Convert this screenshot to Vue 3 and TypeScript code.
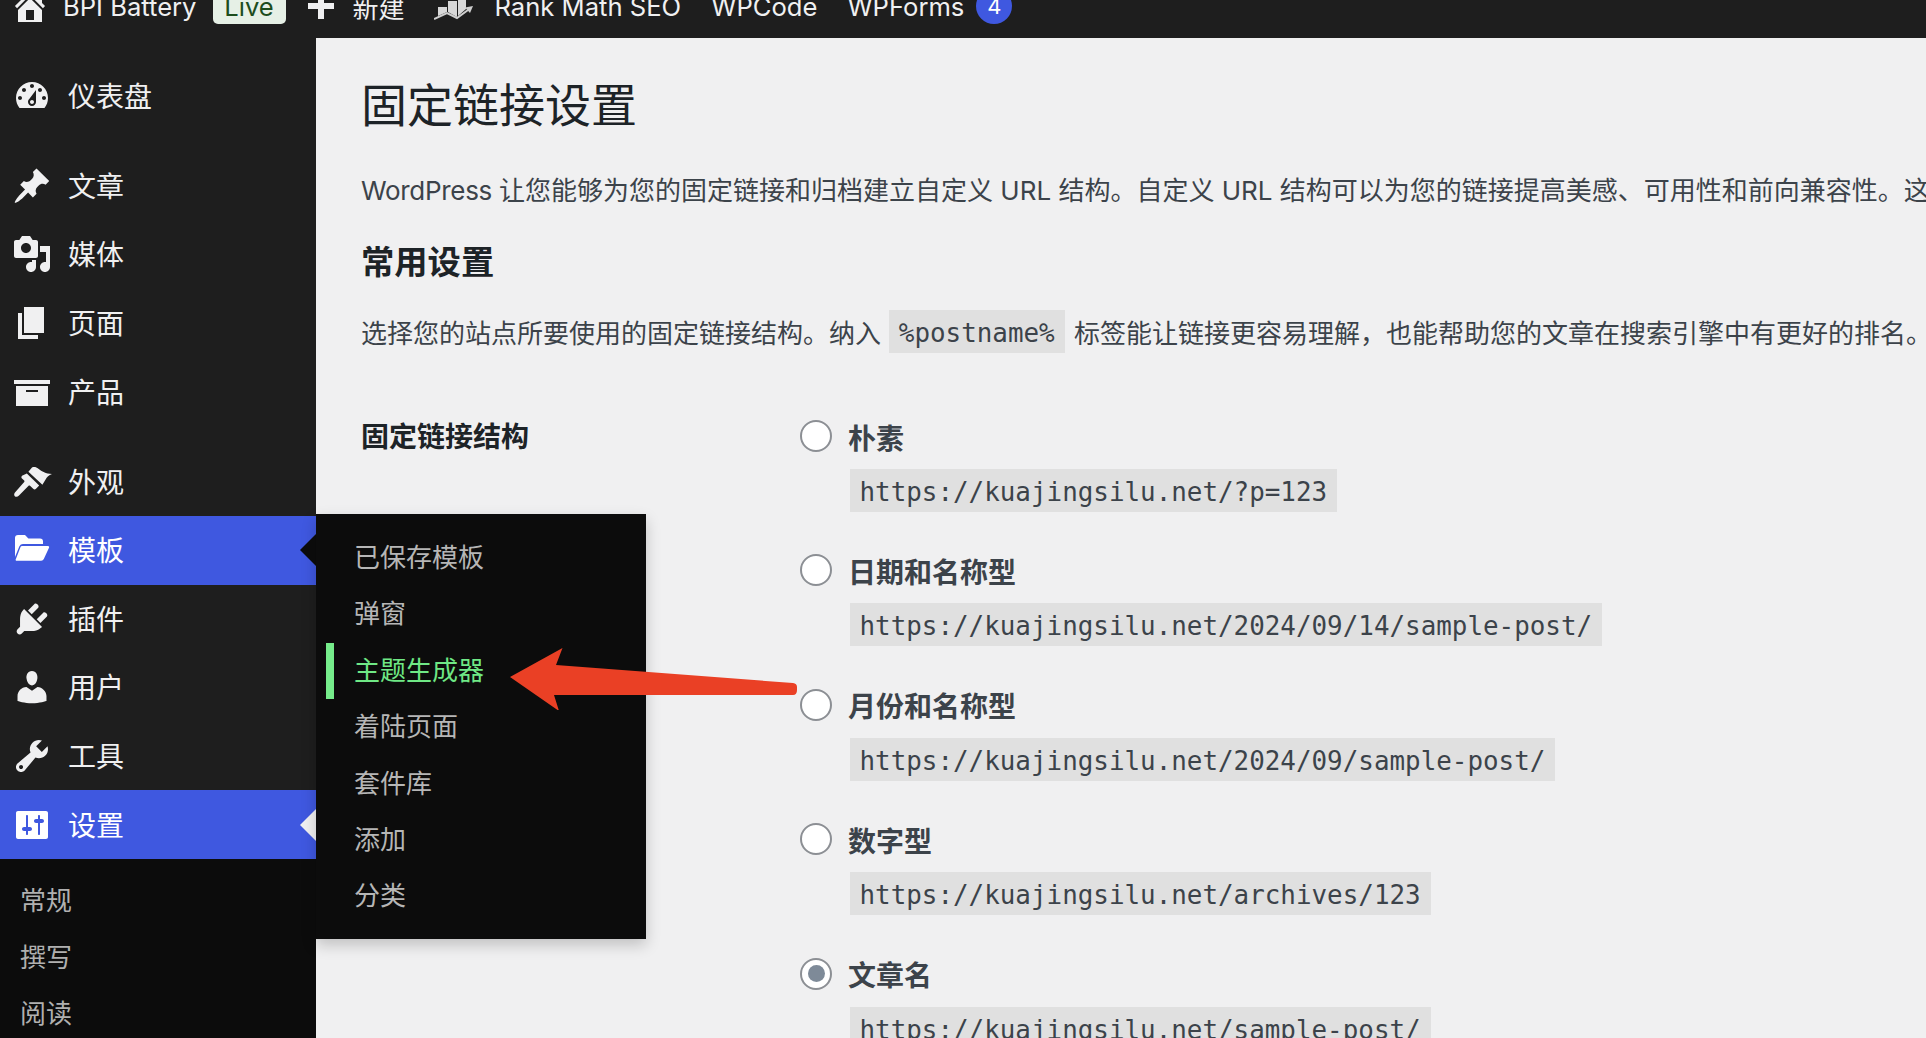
<script setup lang="ts">
interface MenuItem { label: string; d: string; gap?: number; state?: string }
const menu: MenuItem[] = [
  { label: '仪表盘', gap: 1, d: 'M3.76 16h12.48c1.1-1.37 1.76-3.11 1.76-5 0-4.42-3.58-8-8-8s-8 3.58-8 8c0 1.89.66 3.63 1.76 5zM10 4c.55 0 1 .45 1 1s-.45 1-1 1-1-.45-1-1 .45-1 1-1zM6 6c.55 0 1 .45 1 1s-.45 1-1 1-1-.45-1-1 .45-1 1-1zm8 0c.55 0 1 .45 1 1s-.45 1-1 1-1-.45-1-1 .45-1 1-1zm-5.37 5.55L12 7v6c0 1.1-.9 2-2 2s-2-.9-2-2c0-.57.24-1.08.63-1.45zM4 10c.55 0 1 .45 1 1s-.45 1-1 1-1-.45-1-1 .45-1 1-1zm12 0c.55 0 1 .45 1 1s-.45 1-1 1-1-.45-1-1 .45-1 1-1zm-5 3c0-.55-.45-1-1-1s-1 .45-1 1 .45 1 1 1 1-.45 1-1z' },
  { label: '文章', d: 'M10.44 3.02l1.82-1.82 6.36 6.35-1.83 1.82c-1.05-.68-2.48-.57-3.41.36l-.75.75c-.92.93-1.04 2.35-.35 3.41l-1.83 1.82-2.41-2.41-2.8 2.79c-.42.42-3.38 2.71-3.8 2.29s1.86-3.39 2.28-3.81l2.79-2.79L4.1 9.36l1.83-1.82c1.05.69 2.48.57 3.4-.36l.75-.75c.93-.92 1.05-2.35.36-3.41z' },
  { label: '媒体', d: 'M13 11V4c0-.55-.45-1-1-1h-1.67L9 1H5L3.67 3H2c-.55 0-1 .45-1 1v7c0 .55.45 1 1 1h10c.55 0 1-.45 1-1zM7 4.5c1.38 0 2.5 1.12 2.5 2.5S8.38 9.5 7 9.5 4.5 8.38 4.5 7 5.62 4.5 7 4.5zM14 6h5v10.5c0 1.38-1.12 2.5-2.5 2.5S14 17.88 14 16.5s1.12-2.5 2.5-2.5c.17 0 .34.02.5.05V9h-3V6zm-4 8.05V13h2v3.5c0 1.38-1.12 2.5-2.5 2.5S7 17.88 7 16.5 8.12 14 9.5 14c.17 0 .34.02.5.05z' },
  { label: '页面', d: 'M6 15V2h10v13H6zm-1 1h8v2H3V5h2v11z' },
  { label: '产品', gap: 2, d: 'M19 4v2H1V4h18zM2 7h16v10H2V7zm11 3V9H7v1h6z' },
  { label: '外观', d: 'M8.2 4.9L10 2.8c1-.5 2.2-.2 3.2.6 1.8 1.5 3.6 2.4 6.8 2.6-1.6.6-2.6 1.4-3.2 2.7l-1.6 2.7zM7.4 5.8l6.2 5.9-1.6 1.7c-.4.4-1 .4-1.4 0L9 11.9c-.2-.2-.5-.2-.7 0l-4.8 4.9c-.7.7-1.6.8-2.1.3s-.4-1.4.3-2.1l4.4-5c.2-.2.2-.5 0-.7L5 8.3c-.4-.4-.4-1 0-1.4z' },
  { label: '模板', state: 'open', d: 'M1.5 13.5V4A1.5 1.5 0 0 1 3 2.5h3.5l1.7 1.7H14a1.5 1.5 0 0 1 1.5 1.5V7h-10a2 2 0 0 0-1.8 1.1L1.5 13.5zM5 8h13a.6.6 0 0 1 .5.9l-2.6 5.6a1.5 1.5 0 0 1-1.3.9H2.3a.5.5 0 0 1-.4-.8l2.4-6.2A.8.8 0 0 1 5 8z' },
  { label: '插件', d: 'M13.11 4.36L9.87 7.6 8 5.73l3.24-3.24c.35-.34 1.05-.2 1.56.32.52.51.66 1.21.31 1.55zm-8 1.77l.91-1.12 9.01 9.01-1.19.84c-.71.71-2.63 1.16-3.82 1.16H6.14L4.9 17.26c-.59.59-1.54.59-2.12 0-.59-.58-.59-1.53 0-2.12l1.24-1.24v-3.88c0-1.13.4-3.19 1.09-3.89zm7.26 3.97l3.24-3.24c.34-.35 1.04-.21 1.55.31.52.51.66 1.21.31 1.55l-3.24 3.25z' },
  { label: '用户', d: 'M10 9.25c-2.27 0-2.73-3.44-2.73-3.44C7 4.02 7.82 2 9.97 2c2.16 0 2.98 2.02 2.71 3.81 0 0-.41 3.44-2.68 3.44zm0 2.57L12.72 10c2.39 0 4.52 2.33 4.52 4.53v2.49s-3.65 1.13-7.24 1.13c-3.65 0-7.24-1.13-7.24-1.13v-2.49c0-2.25 1.94-4.48 4.47-4.48z' },
  { label: '工具', d: 'M16.68 9.77c-1.34 1.34-3.3 1.67-4.95.99l-5.41 6.52c-.99.99-2.59.99-3.58 0s-.99-2.59 0-3.57l6.52-5.42c-.68-1.65-.35-3.61.99-4.95 1.28-1.28 3.12-1.62 4.72-1.06l-2.89 2.89 2.82 2.82 2.86-2.87c.53 1.58.18 3.39-1.08 4.65zM3.81 16.21c.4.39 1.04.39 1.43 0 .4-.4.4-1.04 0-1.43-.39-.4-1.03-.4-1.43 0-.39.39-.39 1.03 0 1.43z' },
  { label: '设置', state: 'current', d: 'M18 16V4c0-.55-.45-1-1-1H3c-.55 0-1 .45-1 1v12c0 .55.45 1 1 1h14c.55 0 1-.45 1-1zM8 11h1c.55 0 1 .45 1 1s-.45 1-1 1H8v1.5c0 .28-.22.5-.5.5s-.5-.22-.5-.5V13H6c-.55 0-1-.45-1-1s.45-1 1-1h1V5.5c0-.28.22-.5.5-.5s.5.22.5.5V11zm5-2h-1c-.55 0-1-.45-1-1s.45-1 1-1h1V5.5c0-.28.22-.5.5-.5s.5.22.5.5V7h1c.55 0 1 .45 1 1s-.45 1-1 1h-1v5.5c0 .28-.22.5-.5.5s-.5-.22-.5-.5V9z' },
]
const flyout = ['已保存模板', '弹窗', '主题生成器', '着陆页面', '套件库', '添加', '分类']
const settingsSub = ['常规', '撰写', '阅读']
interface Option { label: string; code: string; checked?: boolean }
const options: Option[] = [
  { label: '朴素', code: 'https://kuajingsilu.net/?p=123' },
  { label: '日期和名称型', code: 'https://kuajingsilu.net/2024/09/14/sample-post/' },
  { label: '月份和名称型', code: 'https://kuajingsilu.net/2024/09/sample-post/' },
  { label: '数字型', code: 'https://kuajingsilu.net/archives/123' },
  { label: '文章名', code: 'https://kuajingsilu.net/sample-post/', checked: true },
]
</script>

<template>
  <div class="page">
    <header class="bar">
      <svg class="ico home" viewBox="0 0 20 20"><path d="M16 8.5l1.53 1.53-1.06 1.06L10 4.62l-6.47 6.47-1.06-1.06L10 2.5l4 4v-2h2v4zm-6-2.46l6 5.99V18H4v-5.97zM12 17v-5H8v5h4z" /></svg>
      <span class="site">BPI Battery</span>
      <span class="live">Live</span>
      <svg class="plus" viewBox="0 0 28 28"><path d="M11 1h6v10h10v6H17v10h-6V17H1v-6h10z" /></svg>
      <span class="new">新建</span>
      <svg class="rank" viewBox="0 0 40 40">
        <path d="M4 21h9v5l-9 4zM14 15h9v16l-9-5zM24 12h8v11l-8 7z" fill="#d8d8d8" />
        <path d="M0 33l13-6 10 5 11-8" fill="none" stroke="#cfcfcf" stroke-width="2" />
        <path d="M31 21.5l8-1.5-3 7z" fill="#cfcfcf" />
      </svg>
      <span class="rm">Rank Math SEO</span>
      <span class="wc">WPCode</span>
      <span class="wf">WPForms</span>
      <span class="count">4</span>
    </header>
    <div class="below">
      <aside class="side">
        <ul class="menu">
          <li v-for="m in menu" :key="m.label" class="item" :class="[m.state, m.gap ? 'gap' + m.gap : '']">
            <svg class="ico" viewBox="0 0 20 20"><path fill-rule="evenodd" :d="m.d" /></svg>
            <span class="lbl">{{ m.label }}</span>
            <ul v-if="m.state === 'open'" class="flyout">
              <li v-for="f in flyout" :key="f" :class="{ on: f === '主题生成器' }">{{ f }}</li>
            </ul>
          </li>
        </ul>
        <ul class="sub">
          <li v-for="s in settingsSub" :key="s">{{ s }}</li>
        </ul>
      </aside>
      <main class="main">
        <h1>固定链接设置</h1>
        <p class="intro"><span class="lat">WordPress </span>让您能够为您的固定链接和归档建立自定义 URL 结构。自定义 URL 结构可以为您的链接提高美感、可用性和前向兼容性。这</p>
        <h2>常用设置</h2>
        <p class="lead">选择您的站点所要使用的固定链接结构。纳入 <code>%postname%</code> 标签能让链接更容易理解，也能帮助您的文章在搜索引擎中有更好的排名。</p>
        <div class="form">
          <div class="th">固定链接结构</div>
          <div class="opts">
            <div v-for="o in options" :key="o.label" class="opt">
              <div class="row">
                <span class="radio" :class="{ checked: o.checked }"></span>
                <span class="name">{{ o.label }}</span>
              </div>
              <code class="url">{{ o.code }}</code>
            </div>
          </div>
        </div>
      </main>
    </div>
    <svg class="arrow" viewBox="0 0 300 70" width="300" height="70">
      <path d="M10 37L62.5 8 56 25 293 43q4 .5 4 4v3q0 5-4 5H54l5 16z" fill="#ea4025" />
    </svg>
  </div>
</template>

<style scoped>
.page {
  position: relative;
  width: 1926px;
  height: 1038px;
  overflow: hidden;
  background: #f0f0f1;
  font-family: Inter, "Noto Sans CJK SC", sans-serif;
  display: flex;
  flex-direction: column;
}
ul { list-style: none; margin: 0; padding: 0; }
.bar {
  flex: none;
  height: 64px;
  margin-top: -26px;
  background: #1e1e1e;
  color: #f0f0f1;
  font-size: 25.6px;
  display: flex;
  align-items: center;
  padding-left: 10px;
  white-space: nowrap;
}
.ico { width: 40px; height: 40px; fill: #f0f0f1; flex: none; }
.site { margin-left: 13px; }
.live {
  margin-left: 16px;
  width: 73px;
  height: 36px;
  border-radius: 0 0 5px 5px;
  background: #e6f0e6;
  color: #1d4d1d;
  display: flex;
  align-items: center;
  justify-content: center;
}
.plus { width: 28px; height: 28px; fill: #f0f0f1; margin-left: 21px; }
.new { margin-left: 18px; font-size: 26px; }
.rank { width: 40px; height: 40px; margin-left: 29px; }
.rm { margin-left: 21px; }
.wc { margin-left: 30px; }
.wf { margin-left: 30px; }
.count {
  margin-left: 12px;
  width: 36px;
  height: 36px;
  border-radius: 50%;
  background: #3f58e0;
  color: #fff;
  font-size: 22px;
  display: flex;
  align-items: center;
  justify-content: center;
}
.below { flex: 1; display: flex; min-height: 0; }
.side {
  flex: none;
  width: 316px;
  background: #1e1e1e;
  padding-top: 24px;
  display: flex;
  flex-direction: column;
}
.menu { flex: none; }
.item {
  position: relative;
  height: 68.6px;
  padding-left: 12px;
  display: flex;
  align-items: center;
  gap: 16px;
  color: #f0f0f1;
  font-size: 28px;
}
.lbl { margin-bottom: 2px; }
.item.gap1 { margin-bottom: 21px; }
.item.gap2 { margin-bottom: 21.4px; }
.item.open, .item.current { background: #3f58e0; color: #fff; }
.item.open .ico, .item.current .ico { fill: #fff; }
.item.open::after, .item.current::after {
  content: "";
  position: absolute;
  right: 0;
  top: 50%;
  margin-top: -16px;
  border: 16px solid transparent;
  border-left-width: 0;
  border-right-color: #0c0c0c;
}
.item.current::after { border-right-color: #f0f0f1; }
.flyout {
  position: absolute;
  z-index: 5;
  left: 100%;
  top: -2px;
  width: 330px;
  padding: 16px 0 14px;
  background: #0c0c0c;
  box-shadow: 0 6px 14px rgba(0, 0, 0, .2);
  color: #b6b6b6;
  font-size: 26px;
}
.flyout li {
  height: 56.4px;
  line-height: 56.4px;
  padding-left: 30px;
  margin-left: 8px;
}
.flyout li.on {
  color: #6fe885;
  margin-left: 10px;
  padding-left: 20px;
  border-left: 8px solid #76ec8b;
}
.sub {
  flex: 1;
  background: #0c0c0c;
  padding: 14px 0 0 20px;
  color: #b0b0b0;
  font-size: 26px;
}
.sub li { height: 56.6px; line-height: 56.6px; }
.main {
  flex: 1;
  min-width: 0;
  padding-left: 45px;
  overflow: hidden;
  white-space: nowrap;
  color: #3c434a;
  font-size: 26px;
}
h1 {
  margin: 39px 0 0;
  font-size: 46px;
  font-weight: 400;
  line-height: 56px;
  color: #1d2327;
}
.intro { margin: 40px 0 0; line-height: 36px; }
.lat { letter-spacing: -.3px; }
h2 {
  margin: 31px 0 0;
  font-size: 33.3px;
  font-weight: 700;
  line-height: 44px;
  color: #1d2327;
}
.lead { margin: 26px 0 0; line-height: 47px; }
code {
  font-family: "DejaVu Sans Mono", monospace;
  font-size: 25.9px;
  background: #e0e0e0;
  display: inline-block;
  height: 43px;
  line-height: 47px;
  padding: 0 10px 0 9.5px;
  vertical-align: top;
  margin: 0 2px 0 1px;
}
.form { display: flex; margin-top: 63px; }
.th {
  flex: none;
  width: 439px;
  padding-top: 1px;
  font-size: 28px;
  font-weight: 700;
  line-height: 32px;
  color: #1d2327;
}
.opts { display: flex; flex-direction: column; gap: 42.4px; }
.opt { display: flex; flex-direction: column; align-items: flex-start; }
.row { display: flex; align-items: center; height: 32px; gap: 16px; margin-bottom: 17px; }
.radio {
  width: 32px;
  height: 32px;
  box-sizing: border-box;
  border: 2px solid #8c8f94;
  border-radius: 50%;
  background: #fff;
  display: flex;
  align-items: center;
  justify-content: center;
}
.radio.checked::before {
  content: "";
  width: 17px;
  height: 17px;
  border-radius: 50%;
  background: #7e8a98;
}
.name { font-size: 28px; font-weight: 700; color: #3c434a; padding-top: 1px; }
.url { margin: 0 0 0 50px; }
.arrow {
  position: absolute;
  z-index: 9;
  left: 500px;
  top: 640px;
}
</style>
